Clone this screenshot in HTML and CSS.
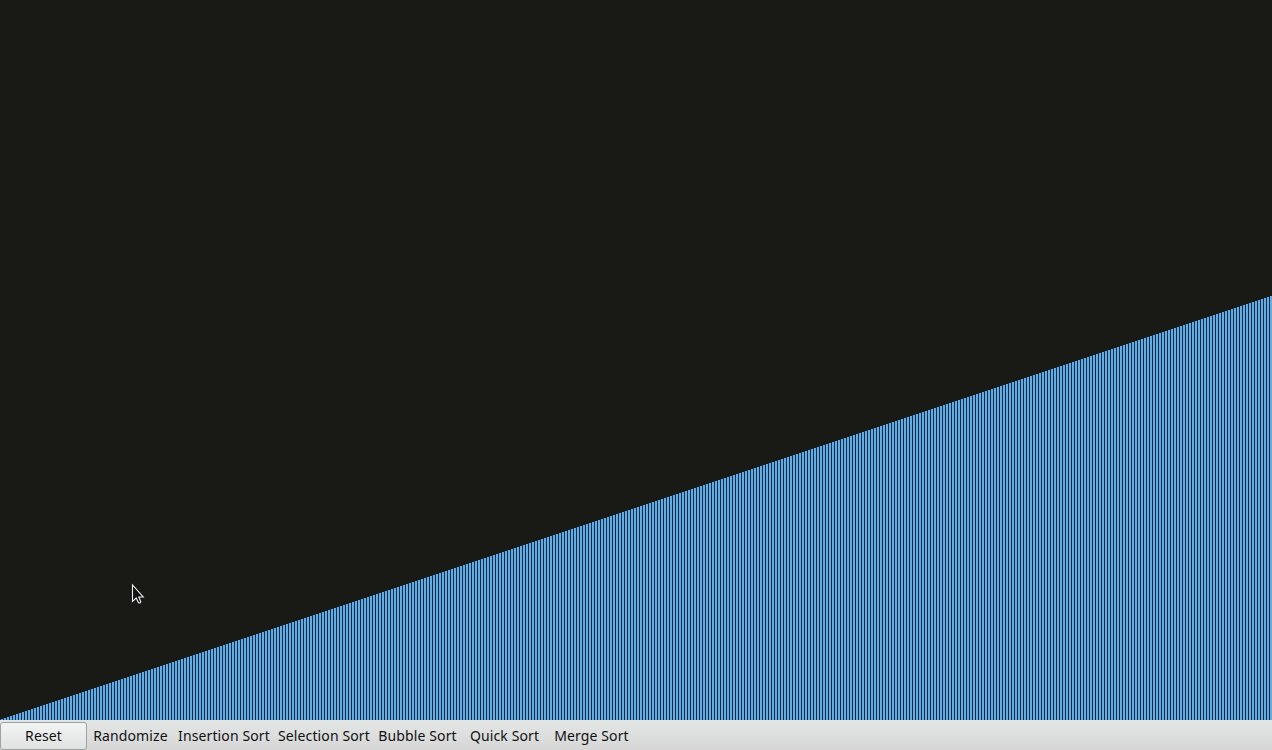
FILE: index.html
```
<!DOCTYPE html>
<html lang="en">
<head>
<meta charset="utf-8">
<title>Sorting</title>
<link rel="stylesheet" href="styles.css">
</head>
<body>
<main class="app">
  <section class="chart" id="chart"></section>
  <nav class="toolbar">
    <button class="btn btn-raised reset">Reset</button>
    <button class="btn randomize">Randomize</button>
    <button class="btn insertion">Insertion Sort</button>
    <button class="btn selection">Selection Sort</button>
    <button class="btn bubble">Bubble Sort</button>
    <button class="btn quick">Quick Sort</button>
    <button class="btn merge">Merge Sort</button>
  </nav>
  <svg class="cursor" width="14" height="22" viewBox="0 0 14 22"><path d="M1.5 2V18.3L5.2 15L7.5 19.8Q9 20.6 9.8 18.8L7.8 14H12.2Z" fill="#11110f" stroke="#eee" stroke-width="1.1"/></svg>
</main>
<script src="bars.js"></script>
</body>
</html>
```
FILE: styles.css
```
body { margin: 0; }
.app {
  position: relative;
  display: flex;
  flex-direction: column;
  width: 1272px;
  height: 750px;
  overflow: hidden;
  background: #191916;
}
.chart {
  flex: 1;
  display: flex;
  align-items: flex-end;
}
.bar {
  box-sizing: border-box;
  flex: 0 0 3px;
  background: #65acdc;
  border-left: 1px solid #082c55;
}
.toolbar {
  display: flex;
  box-sizing: border-box;
  height: 30px;
  padding-top: 2px;
  background: linear-gradient(#e4e6e6, #d6d6d6);
}
.btn {
  box-sizing: border-box;
  height: 28px;
  padding: 0 0 1px;
  border: 1px solid transparent;
  border-radius: 3px;
  background: none;
  color: #111;
  font: 14px/20px "Noto Sans", sans-serif;
  letter-spacing: 0.12px;
  white-space: nowrap;
}
.btn-raised {
  border-color: #a0a2a2;
  background: linear-gradient(#f3f5f5, #e0e2e2);
}
.reset { width: 87px; }
.randomize { width: 87px; }
.insertion { width: 100px; }
.selection { width: 100px; }
.bubble { width: 87px; }
.quick { width: 87px; }
.merge { width: 87px; }
.cursor {
  position: absolute;
  left: 131px;
  top: 583px;
}
```
FILE: bars.js
```
const chart = document.getElementById('chart');
for (let value = 1; value <= 424; value++) {
  const bar = document.createElement('div');
  bar.className = 'bar';
  bar.style.height = value + 'px';
  chart.appendChild(bar);
}
```
